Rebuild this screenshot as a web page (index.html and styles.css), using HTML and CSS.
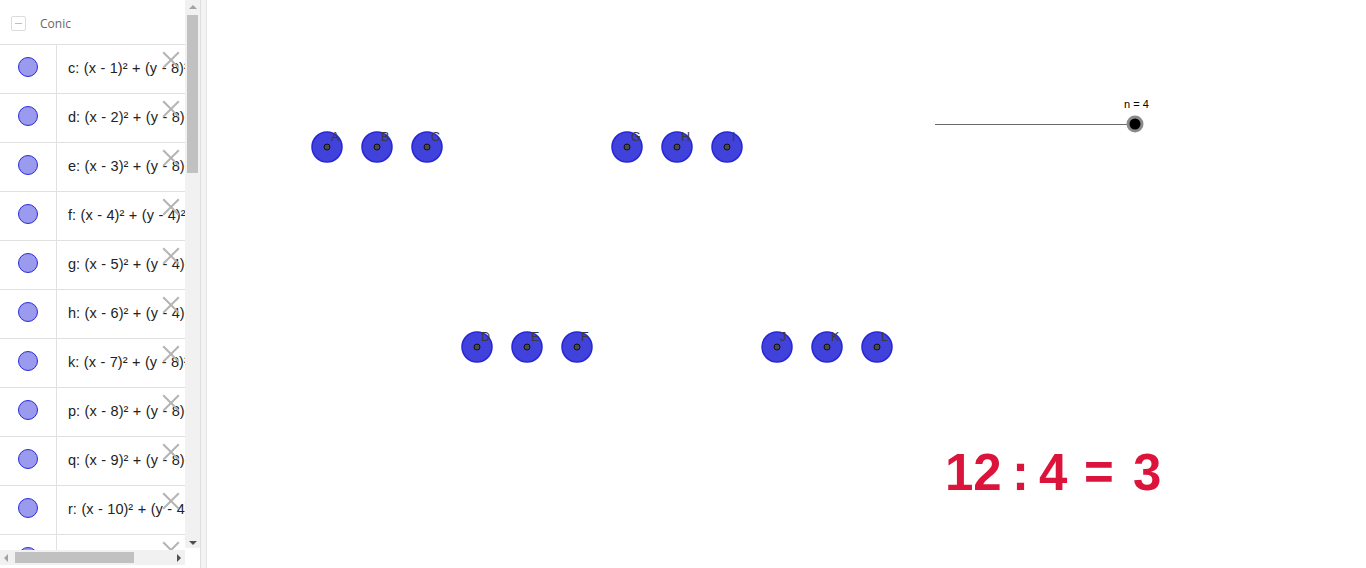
FILE: index.html
```html
<!DOCTYPE html>
<html>
<head>
<meta charset="utf-8">
<link rel="stylesheet" href="styles.css">
</head>
<body>
<div class="app">
  <div class="algebra">
    <div class="alg-main">
      <div class="alg-content">
        <div class="alg-header">
          <span class="collapse"><span class="minus"></span></span>
          <span class="group-name">Conic</span>
        </div>
        <div class="row"><div class="mark"><span class="dot"></span></div><div class="expr">c: (x - 1)² + (y - 8)² = 0.2</div><span class="del"></span></div>
        <div class="row"><div class="mark"><span class="dot"></span></div><div class="expr">d: (x - 2)² + (y - 8)² = 0.2</div><span class="del"></span></div>
        <div class="row"><div class="mark"><span class="dot"></span></div><div class="expr">e: (x - 3)² + (y - 8)² = 0.2</div><span class="del"></span></div>
        <div class="row"><div class="mark"><span class="dot"></span></div><div class="expr">f: (x - 4)² + (y - 4)² = 0.2</div><span class="del"></span></div>
        <div class="row"><div class="mark"><span class="dot"></span></div><div class="expr">g: (x - 5)² + (y - 4)² = 0.2</div><span class="del"></span></div>
        <div class="row"><div class="mark"><span class="dot"></span></div><div class="expr">h: (x - 6)² + (y - 4)² = 0.2</div><span class="del"></span></div>
        <div class="row"><div class="mark"><span class="dot"></span></div><div class="expr">k: (x - 7)² + (y - 8)² = 0.2</div><span class="del"></span></div>
        <div class="row"><div class="mark"><span class="dot"></span></div><div class="expr">p: (x - 8)² + (y - 8)² = 0.2</div><span class="del"></span></div>
        <div class="row"><div class="mark"><span class="dot"></span></div><div class="expr">q: (x - 9)² + (y - 8)² = 0.2</div><span class="del"></span></div>
        <div class="row"><div class="mark"><span class="dot"></span></div><div class="expr">r: (x - 10)² + (y - 4)² = 0.2</div><span class="del"></span></div>
        <div class="row"><div class="mark"><span class="dot"></span></div><div class="expr">s: (x - 11)² + (y - 4)² = 0.2</div><span class="del"></span></div>
      </div>
      <div class="vscroll">
        <span class="arr arr-up"></span>
        <span class="vthumb"></span>
        <span class="arr arr-down"></span>
      </div>
    </div>
    <div class="alg-bottom">
      <div class="hscroll">
        <span class="arr arr-left"></span>
        <span class="hthumb"></span>
        <span class="arr arr-right"></span>
      </div>
      <div class="corner"></div>
    </div>
  </div>
  <div class="splitter"></div>
  <div class="graphics">
    <svg class="canvas" viewBox="207 0 1159 568" width="1159" height="568">
      <g class="circles">
        <circle cx="327" cy="147" r="15"/><circle cx="377" cy="147" r="15"/><circle cx="427" cy="147" r="15"/>
        <circle cx="627" cy="147" r="15"/><circle cx="677" cy="147" r="15"/><circle cx="727" cy="147" r="15"/>
        <circle cx="477" cy="347" r="15"/><circle cx="527" cy="347" r="15"/><circle cx="577" cy="347" r="15"/>
        <circle cx="777" cy="347" r="15"/><circle cx="827" cy="347" r="15"/><circle cx="877" cy="347" r="15"/>
      </g>
      <g class="pts">
        <circle cx="327" cy="147" r="3"/><circle cx="377" cy="147" r="3"/><circle cx="427" cy="147" r="3"/>
        <circle cx="627" cy="147" r="3"/><circle cx="677" cy="147" r="3"/><circle cx="727" cy="147" r="3"/>
        <circle cx="477" cy="347" r="3"/><circle cx="527" cy="347" r="3"/><circle cx="577" cy="347" r="3"/>
        <circle cx="777" cy="347" r="3"/><circle cx="827" cy="347" r="3"/><circle cx="877" cy="347" r="3"/>
      </g>
      <g class="labels">
        <text x="331" y="141">A</text><text x="381" y="141">B</text><text x="431" y="141">C</text>
        <text x="631" y="141">G</text><text x="681" y="141">H</text><text x="732" y="141">I</text>
        <text x="481" y="341">D</text><text x="531" y="341">E</text><text x="581" y="341">F</text>
        <text x="780" y="341">J</text><text x="831" y="341">K</text><text x="881" y="341">L</text>
      </g>
      <line class="slider-line" x1="935" y1="124.5" x2="1135" y2="124.5"/>
      <circle class="slider-ring" cx="1135" cy="124" r="8.5"/>
      <circle class="slider-knob" cx="1135" cy="124" r="5.5"/>
      <text class="slider-label" x="1124" y="108">n = 4</text>
      <text class="result" y="490"><tspan x="945">12</tspan><tspan x="1012">:</tspan><tspan x="1039">4</tspan><tspan x="1084">=</tspan><tspan x="1133">3</tspan></text>
    </svg>
  </div>
</div>
</body>
</html>
```

FILE: styles.css
```css
html, body {
  margin: 0;
  padding: 0;
  background: #fff;
  font-family: "Liberation Sans", Arial, sans-serif;
  overflow: hidden;
}
.app {
  display: flex;
  width: 1366px;
  height: 568px;
}
.algebra {
  width: 200px;
  height: 568px;
  display: flex;
  flex-direction: column;
  flex: none;
}
.alg-main {
  display: flex;
  height: 550px;
}
.alg-content {
  width: 185px;
  overflow: hidden;
  position: relative;
}
.alg-header {
  height: 44px;
  display: flex;
  align-items: center;
  padding-left: 11px;
  box-sizing: border-box;
  padding-top: 2px;
}
.collapse {
  width: 13px;
  height: 13px;
  border: 1px solid #dcdcdc;
  border-radius: 2px;
  display: flex;
  align-items: center;
  justify-content: center;
}
.minus {
  width: 7px;
  height: 1px;
  background: #bdbdbd;
}
.group-name {
  margin-left: 14px;
  font-size: 12px;
  color: #666;
  font-family: "Open Sans", "Liberation Sans", sans-serif;
}
.row {
  height: 48px;
  border-top: 1px solid #e0e0e0;
  display: flex;
  position: relative;
  width: 400px;
}
.mark {
  width: 57px;
  border-right: 1px solid #e0e0e0;
  display: flex;
  align-items: center;
  justify-content: center;
  flex: none;
  padding-bottom: 4px;
  box-sizing: border-box;
}
.dot {
  width: 18px;
  height: 18px;
  border-radius: 50%;
  background: #9a9aee;
  border: 1px solid #2a2ad8;
}
.expr {
  padding-left: 11px;
  display: flex;
  align-items: center;
  font-size: 14.5px;
  color: #222;
  white-space: nowrap;
  padding-bottom: 3px;
  word-spacing: 0.5px;
}
.del {
  position: absolute;
  left: 163px;
  top: 7px;
  width: 16px;
  height: 16px;
}
.del::before, .del::after {
  content: "";
  position: absolute;
  left: -3px;
  top: 7px;
  width: 22px;
  height: 2px;
  background: #b4b4b4;
  transform: rotate(45deg);
}
.del::after {
  transform: rotate(-45deg);
}
.vscroll {
  width: 15px;
  height: 548px;
  background: #f1f1f1;
  position: relative;
  flex: none;
}
.vthumb {
  position: absolute;
  left: 2px;
  top: 15px;
  width: 11px;
  height: 158px;
  background: #c1c1c1;
}
.arr {
  position: absolute;
  width: 0;
  height: 0;
}
.arr-up {
  left: 4px;
  top: 5px;
  border-left: 4px solid transparent;
  border-right: 4px solid transparent;
  border-bottom: 4px solid #a3a3a3;
}
.arr-down {
  left: 4px;
  bottom: 3px;
  border-left: 4px solid transparent;
  border-right: 4px solid transparent;
  border-top: 4px solid #505050;
}
.alg-bottom {
  display: flex;
  height: 18px;
}
.hscroll {
  width: 185px;
  height: 15px;
  background: #f1f1f1;
  position: relative;
}
.hthumb {
  position: absolute;
  left: 15px;
  top: 2px;
  width: 119px;
  height: 11px;
  background: #c1c1c1;
}
.arr-left {
  left: 4px;
  top: 4px;
  border-top: 4px solid transparent;
  border-bottom: 4px solid transparent;
  border-right: 4px solid #a3a3a3;
}
.arr-right {
  right: 4px;
  top: 4px;
  border-top: 4px solid transparent;
  border-bottom: 4px solid transparent;
  border-left: 4px solid #505050;
}
.corner {
  width: 15px;
  background: #fff;
}
.splitter {
  width: 5px;
  flex: none;
  background: #f3f3f3;
  border-left: 1px solid #dedede;
  border-right: 1px solid #e6e6e6;
}
.graphics {
  flex: 1;
  height: 568px;
  background: #fff;
}
.canvas {
  display: block;
}
.circles circle {
  fill: #4141dc;
  stroke: #2626d6;
  stroke-width: 1.5;
}
.pts circle {
  fill: #4a4a4a;
  stroke: #111;
  stroke-width: 1;
}
.labels text {
  font-family: "Liberation Sans", Arial, sans-serif;
  font-size: 12.5px;
  fill: #3a3a3a;
}
.slider-line {
  stroke: #6a6a6a;
  stroke-width: 1;
}
.slider-ring {
  fill: #8a8a8a;
}
.slider-knob {
  fill: #000;
}
.slider-label {
  font-family: "Liberation Sans", Arial, sans-serif;
  font-size: 11px;
  fill: #000;
}
.result {
  font-family: "Liberation Sans", Arial, sans-serif;
  font-weight: bold;
  font-size: 51px;
  fill: #dc143c;
}
```
